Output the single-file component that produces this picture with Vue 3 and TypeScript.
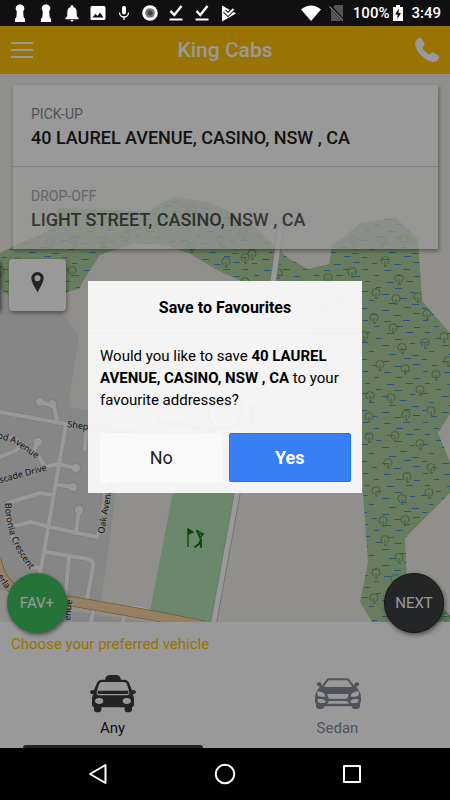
<script setup lang="ts">
import { ref } from 'vue'

type Point = [number, number]

const pickup = '40 LAUREL AVENUE, CASINO, NSW , CA'
const dropoff = 'LIGHT STREET, CASINO, NSW , CA'
const vehicle = ref('Any')
const dialogOpen = ref(true)

const forest =
  'M0 253L12 247L52 229L58 208L110 210L148 212L160 204L175 197L208 202L226 210L255 227L288 258L308 269L329 264L332 246L361 223L395 217L418 239L422 301L450 333V414L438 433L450 462V493L405 538L407 580L440 603L450 616V622H372L360 602L368 562L363 493L361 440L355 375L322 397L313 370L310 335L293 313L247 284L217 270L190 254L165 245L135 243L100 255L85 278L79 289L67 292L9 296L0 289Z'

const trees: Point[] = [
  [385, 261], [352, 272], [399, 279], [376, 293], [396, 299], [418, 297], [374, 318], [427, 314],
  [393, 328], [425, 343], [444, 337], [402, 348], [380, 365], [405, 369], [436, 375], [420, 390],
  [370, 396], [391, 398], [431, 411], [406, 415], [369, 417], [369, 437], [395, 436], [420, 444],
  [388, 463], [431, 468], [407, 477], [376, 491], [429, 493], [402, 499], [383, 521], [405, 520],
  [385, 540], [399, 558], [376, 573], [395, 579], [374, 598], [445, 617], [243, 233], [354, 241],
  [382, 241], [404, 240], [252, 254], [245, 258], [278, 273], [226, 262], [245, 282], [328, 278],
  [313, 292], [50, 243], [74, 241], [103, 241], [125, 236], [192, 210], [220, 240], [192, 247],
  [72, 271], [18, 262], [0, 271], [340, 300], [325, 312], [352, 346], [364, 336], [448, 361],
]

const dashes: Point[] = [
  [2, 2], [22, 4], [44, 1], [12, 8], [34, 9], [53, 7], [3, 14], [24, 15], [43, 14], [14, 20],
  [36, 20], [54, 21], [5, 26], [27, 27], [46, 26], [16, 32], [35, 33], [1, 36], [50, 37],
  [22, 39], [40, 43], [9, 45], [29, 48], [52, 49],
]

const roads = [
  'M66 424L40 575L37 604',
  'M0 412L66 424L120 435',
  'M57 420L54 406L40 402',
  'M0 436L15 438L38 455L45 467L58 464L76 468',
  'M38 442L33 452',
  'M0 457L15 451L20 446',
  'M58 485L73 487',
  'M8 503L40 493L53 495',
  'M8 503L11 532L21 558L30 567L40 568',
  'M15 526L30 522L50 527L97 537L101 528L108 470L112 435',
  'M79 510L76 533',
  'M46 552L88 559Q94 561 93 566L87 600',
  'M69 556L65 602',
  'M86 430L85 449',
  'M93 611L91 624',
  'M124 616L123 624',
  'M130 609L136 607L146 609L148 613',
  'M112 435L125 380L150 358',
  'M112 380L160 418L230 436',
]

const deadEnds: Point[] = [[40, 402], [52, 404], [38, 442], [76, 468], [73, 487], [79, 510]]
</script>

<template>
  <div class="phone">
    <div class="status">
      <div class="notices">
        <svg v-for="n in 2" :key="n" viewBox="0 0 20 20"><path d="M10 1.200a4.400 4.400 0 0 0-3.200 7.400L6.400 14l-1.400 2v3h10v-3l-1.400-2-.4-5.400A4.400 4.400 0 0 0 10 1.200Z" /></svg>
        <svg viewBox="0 0 20 20"><path d="M10 2.200c-.8 0-1.300.5-1.300 1.200v.6C6.300 4.600 5.300 6.600 5.300 9v4.300l-1.900 2v.9h13.200v-.9l-1.900-2V9c0-2.400-1-4.400-3.400-5v-.6c0-.7-.5-1.200-1.300-1.200ZM8.500 17a1.500 1.500 0 0 0 3 0Z" /></svg>
        <svg viewBox="0 0 20 20"><path fill-rule="evenodd" d="M4 3h12q1.500 0 1.500 1.500v11Q17.500 17 16 17H4q-1.500 0-1.500-1.500v-11Q2.500 3 4 3Zm.5 11.500h11L12 9.500 9.500 13l-2-2.300Z" /></svg>
        <svg viewBox="0 0 20 20"><rect x="8" y="3" width="4" height="8.500" rx="2" /><path class="line" d="M5.500 9.500a4.500 4.500 0 0 0 9 0M10 14v3" stroke-width="1.300" /></svg>
        <svg viewBox="0 0 20 20"><circle cx="10" cy="10" r="7.800" /><circle cx="10" cy="10" r="4.800" fill="#777" /><circle cx="10" cy="10" r="2.500" fill="#444" /></svg>
        <svg v-for="n in 2" :key="'c' + n" viewBox="0 0 20 20"><path class="line" d="M4.500 8l3.800 4L15.500 3" stroke-width="2.400" /><path d="M3.500 15.500h13v2h-13Z" /></svg>
        <svg viewBox="0 0 20 20"><path d="M4 2.500L18 10.500 4 18.500Z" /><path d="M6.500 8l3.500 3.500L16.500 5" fill="none" stroke="#101010" stroke-width="4" /><path class="line" d="M6.500 8l3.500 3.500L15.500 6" stroke-width="2" /></svg>
      </div>
      <div class="state">
        <svg class="wifi" viewBox="0 0 20 16"><path d="M0 4.500Q10-3.500 20 4.500L10 16Z" /></svg>
        <svg class="sim" viewBox="0 0 16 16"><path fill="#555" d="M6 0h8v16H2V4Z" /><path d="M1 1l13.500 14.500" stroke="#101010" stroke-width="3" /><path d="M.5 1.500L14 15.500" stroke="#777" stroke-width="1.200" /></svg>
        <span>100%</span>
        <svg class="battery" viewBox="0 0 10 16"><path d="M3 0h4v2h3v14H0V2h3Z" /><path fill="#101010" d="M6 3.500L2 9.500h2.500V14L8 8H5.600Z" /></svg>
        <span>3:49</span>
      </div>
    </div>

    <div class="app">
      <header class="bar">
        <button class="icon-button" type="button" aria-label="Menu">
          <svg width="24" height="16" viewBox="0 0 24 16"><path d="M1 1h22M1 8h22M1 15h22" stroke="#fff" stroke-width="2" /></svg>
        </button>
        <h1>King Cabs</h1>
        <button class="icon-button" type="button" aria-label="Call">
          <svg width="26" height="26" viewBox="0 0 26 26"><path fill="#fff" d="M4.500 1.200C6 .2 7.200.9 8 2.200l2.200 3.900c.7 1.300.3 2.300-.7 3.200-1 .9-1.200 1.400-.5 2.500 1.200 2 3 3.800 5 5 1.100.7 1.700.5 2.600-.4 1-1.100 2-1.400 3.300-.7l3.900 2.200c1.300.8 1.800 1.900 1 3.300-1.300 2.400-3.300 3.900-6 3.700-4.200-.4-8.900-3.500-12.400-7.100C3.400 14.800 1.500 11 1.200 7.300.9 4.700 2.200 2.600 4.500 1.200Z" /></svg>
        </button>
      </header>

      <main class="map">
        <svg class="tiles" viewBox="0 74 450 548" preserveAspectRatio="xMidYMin slice" aria-hidden="true">
          <defs>
            <pattern id="marsh" width="60" height="51" patternUnits="userSpaceOnUse">
              <rect v-for="(d, i) in dashes" :key="i" :x="d[0]" :y="d[1]" :width="i % 3 ? 7 : 5" height="1" fill="#4a90cc" />
            </pattern>
            <clipPath id="forest-clip"><path :d="forest" /></clipPath>
            <path id="wood-line" d="M-3 438L14 443L44 464" />
            <path id="boronia-line" d="M5 503Q6 548 40 580" />
            <path id="primary-line" d="M-3 576Q4 590 22 603" />
          </defs>
          <path d="M0 74H450V622H0Z" fill="#f2efe9" />
          <path d="M0 285L60 310L79 335L68 407L122 416L116 493L101 602L0 590Z" fill="#e0dfdf" />
          <path d="M70 611L150 622H60Z" fill="#e0dfdf" />
          <path :d="forest" fill="#add19e" />
          <path :d="forest" fill="url(#marsh)" />
          <g clip-path="url(#forest-clip)" fill="none" stroke="#7ca872" stroke-width="1.300">
            <path v-for="(t, i) in trees" :key="i" :d="`M${t[0] - 2} ${t[1] + 3}A4 4 0 1 1 ${t[0] + 2} ${t[1] + 3}M${t[0]} ${t[1]}V${t[1] + 6}M${t[0] - 1} ${t[1] + 5}H${t[0] + 2}`" />
          </g>
          <path d="M227 376H244V389H227ZM180 455L150 611L214 623L245 445Z" fill="#b5e3b5" />
          <g fill="none" stroke="#cfcfcf" stroke-width="5" stroke-linejoin="round" stroke-linecap="round">
            <path v-for="(r, i) in roads" :key="i" :d="r" />
            <path d="M281 226L274 275L236 500L213 626" stroke="#c0c0c0" stroke-width="7" />
          </g>
          <circle v-for="(c, i) in deadEnds" :key="'o' + i" :cx="c[0]" :cy="c[1]" r="5" fill="#cfcfcf" />
          <g fill="none" stroke="#fff" stroke-width="4" stroke-linejoin="round" stroke-linecap="round">
            <path v-for="(r, i) in roads" :key="i" :d="r" />
            <path d="M281 226L274 275L236 500L213 626" stroke-width="5" />
          </g>
          <circle v-for="(c, i) in deadEnds" :key="'i' + i" :cx="c[0]" :cy="c[1]" r="4" fill="#fff" />
          <path d="M-4 558Q2 590 30 598L70 601L150 615L205 626" fill="none" stroke="#b07a28" stroke-width="10" />
          <path d="M-4 558Q2 590 30 598L70 601L150 615L205 626" fill="none" stroke="#fcd6a4" stroke-width="9" />
          <g class="street-names">
            <text><textPath href="#wood-line">od Avenue</textPath></text>
            <text transform="translate(0 483) rotate(-15)">scade Drive</text>
            <text transform="translate(67 427) rotate(8)">Sheppard Street</text>
            <text><textPath href="#boronia-line">Boronia Crescent</textPath></text>
            <text transform="translate(104 534) rotate(-80)">Oak Avenue</text>
            <text><textPath href="#primary-line">erla</textPath></text>
            <text transform="translate(70 621) rotate(-84)">enue</text>
            <text transform="translate(133 370) rotate(5)">Fairway Drive</text>
            <text transform="translate(156 423) rotate(10)">Laurel Avenue</text>
            <text transform="translate(250 458) rotate(-84)">Young Street</text>
          </g>
          <path d="M188 547V529L193 532L188 534" fill="#107810" stroke="#107810" stroke-width="1.400" />
          <g fill="none" stroke="#107810" stroke-linecap="round" stroke-linejoin="round">
            <path d="M204 534L196 530L198 533" stroke-width="1" />
            <path d="M198 534L203 534L200 538" stroke-width="1.500" />
            <path d="M199 535L201 540L199 544L195 547M201 540L201 547" stroke-width="2" />
          </g>
          <circle cx="198" cy="532" r="1.500" fill="#107810" />
          <g fill="none" stroke="#777"><circle cx="225" cy="412" r="17" stroke-width="2" /><path d="M225 378V412" /></g>
        </svg>

        <section class="trip">
          <div class="leg">
            <span class="leg-label">PICK-UP</span>
            <strong>{{ pickup }}</strong>
          </div>
          <div class="leg faded">
            <span class="leg-label">DROP-OFF</span>
            <strong>{{ dropoff }}</strong>
          </div>
        </section>
        <div class="side-tab"></div>
        <button class="locate" type="button" aria-label="Use my location">
          <svg width="13" height="20" viewBox="0 0 13 20"><path fill="#3c3e42" fill-rule="evenodd" d="M6.500 0A6.200 6.200 0 0 0 .3 6.200C.3 10.500 6.500 20 6.500 20s6.200-9.500 6.200-13.800A6.200 6.200 0 0 0 6.500 0Zm0 3.200a3 3 0 1 1 0 6 3 3 0 0 1 0-6Z" /></svg>
        </button>
        <button class="round fav" type="button">FAV+</button>
        <button class="round next" type="button">NEXT</button>
      </main>

      <section class="vehicles">
        <h2>Choose your preferred vehicle</h2>
        <div class="options">
          <button type="button" class="option" :class="{ active: vehicle === 'Any' }" @click="vehicle = 'Any'">
            <svg width="46" height="38" viewBox="0 0 138 114">
              <path fill="currentColor" fill-rule="evenodd" d="M46 14V9Q50 0 60 0H78Q88 0 92 9V14H104Q114 15 117 23L126 46H134Q138 47 138 52Q137 58 128 58L132 68V90Q131 96 126 97V105Q125 112 115 112Q104 112 104 105V97H34V105Q33 112 23 112Q12 112 12 105V97Q7 96 6 90V68L10 58Q1 58 0 52Q0 47 4 46H12L21 23Q24 15 34 14ZM36 21Q29 22 27 28L20 52Q19 61 27 61H111Q119 61 118 52L111 28Q109 22 102 21ZM28 69C20 69 15 73 15 78S20 87 28 87S40 83 40 78S36 69 28 69ZM110 69C102 69 98 73 98 78S102 87 110 87S123 83 123 78S118 69 110 69Z" />
              <path fill="currentColor" d="M24 47H114L116 54Q114 57 110 57H28Q24 57 22 54Z" />
            </svg>
            <span>Any</span>
          </button>
          <button type="button" class="option" :class="{ active: vehicle === 'Sedan' }" @click="vehicle = 'Sedan'">
            <svg width="46" height="38" viewBox="0 -10 138 114">
              <path fill="currentColor" fill-rule="evenodd" d="M42 0H96Q101 0 104 4L117 22Q118 14 123 12Q131 10 133 17Q132 24 123 24L132 37Q138 46 138 58V68Q138 73 135 76V84Q134 92 125 92H117Q110 91 109 84H29Q28 91 21 92H13Q4 92 3 84V76Q0 73 0 68V58Q0 46 6 37L15 24Q6 24 5 17Q7 10 15 12Q20 14 21 22L34 4Q37 0 42 0ZM43 6Q40 6 38 9L26 26H112L100 9Q98 6 95 6ZM8 38Q5 45 7 51Q10 55 18 55H31Q31 46 21 42ZM130 38Q133 45 131 51Q128 55 120 55H107Q107 46 117 42ZM37 47Q38 58 43 61H95Q100 58 101 47ZM8 62V69Q9 74 16 74H28L33 70Q28 63 19 62ZM130 62V69Q129 74 122 74H110L105 70Q110 63 119 62ZM42 68L36 76H102L96 68Z" />
            </svg>
            <span>Sedan</span>
          </button>
        </div>
      </section>

      <div v-if="dialogOpen" class="backdrop">
        <div class="dialog" role="dialog" aria-modal="true" aria-labelledby="dialog-title">
          <h2 id="dialog-title">Save to Favourites</h2>
          <p>Would you like to save <b>{{ pickup }}</b> to your favourite addresses?</p>
          <div class="actions">
            <button type="button" class="no" @click="dialogOpen = false">No</button>
            <button type="button" class="yes" @click="dialogOpen = false">Yes</button>
          </div>
        </div>
      </div>
    </div>

    <nav class="system">
      <button type="button" aria-label="Back"><svg width="22" height="22" viewBox="0 0 22 22"><path d="M18.500 2V20L3 11Z" /></svg></button>
      <button type="button" aria-label="Home"><svg width="22" height="22" viewBox="0 0 22 22"><circle cx="11" cy="11" r="9.300" /></svg></button>
      <button type="button" aria-label="Recent apps"><svg width="22" height="22" viewBox="0 0 22 22"><rect x="3" y="3" width="16" height="16" /></svg></button>
    </nav>
  </div>
</template>

<style>
body {
  margin: 0;
}
</style>

<style scoped>
.phone {
  display: flex;
  flex-direction: column;
  height: 100vh;
  overflow: hidden;
  font-family: Roboto, "Liberation Sans", sans-serif;
  font-size: 15px;
}
button {
  margin: 0;
  padding: 0;
  border: 0;
  background: none;
  font: inherit;
  cursor: pointer;
}
h1,
h2,
p {
  margin: 0;
}
.status {
  display: flex;
  justify-content: space-between;
  align-items: center;
  height: 26px;
  padding: 0 9px 0 10px;
  background: #101010;
  color: #fff;
  font-weight: 500;
}
.status svg {
  fill: #fff;
}
.status .line {
  fill: none;
  stroke: #fff;
}
.notices {
  display: flex;
  gap: 6px;
}
.notices svg {
  width: 20px;
  height: 20px;
}
.state {
  display: flex;
  align-items: center;
  gap: 8px;
}
.state .wifi {
  width: 20px;
  height: 16px;
}
.state .sim {
  width: 16px;
  height: 16px;
}
.state .battery {
  width: 10px;
  height: 16px;
  margin-left: -4px;
}
.app {
  position: relative;
  display: flex;
  flex: 1;
  flex-direction: column;
  min-height: 0;
  overflow: hidden;
}
.bar {
  display: flex;
  align-items: center;
  justify-content: space-between;
  height: 48px;
  padding: 0 10px;
  background: #ffc107;
  color: #fff;
}
.bar h1 {
  font-size: 21px;
  font-weight: 500;
}
.icon-button {
  display: flex;
  width: 26px;
}
.map {
  position: relative;
  z-index: 1;
  flex: 1;
  padding: 11px 12px 0 13px;
}
.tiles {
  position: absolute;
  inset: 0;
  width: 100%;
  height: 100%;
}
.street-names {
  fill: #222;
  stroke: #e8e8e8;
  stroke-width: 2px;
  paint-order: stroke;
  font-family: "Noto Sans", sans-serif;
  font-size: 9px;
}
.trip {
  position: relative;
  box-shadow: 1px 2px 4px rgba(0, 0, 0, 0.4);
}
.leg {
  display: flex;
  flex-direction: column;
  gap: 2px;
  height: 82px;
  box-sizing: border-box;
  padding: 19px 18px 0;
  border-bottom: 1px solid #dad8d6;
  background: #fff;
  color: #222;
}
.leg.faded {
  border-bottom: 0;
  opacity: 0.7;
}
.leg-label {
  color: #868b98;
  font-size: 14px;
  line-height: 20px;
}
.leg strong {
  font-size: 18px;
  font-weight: 500;
  line-height: 24px;
}
.side-tab {
  position: absolute;
  top: 186px;
  left: -10px;
  width: 10px;
  height: 50px;
  box-shadow: 1px 2px 4px rgba(0, 0, 0, 0.6);
}
.locate {
  position: absolute;
  top: 185px;
  left: 9px;
  display: flex;
  align-items: center;
  justify-content: center;
  width: 57px;
  height: 52px;
  padding-bottom: 6px;
  border-radius: 4px;
  background: #fff;
  box-shadow: 1px 2px 4px rgba(0, 0, 0, 0.4);
}
.round {
  position: absolute;
  bottom: -11px;
  width: 60px;
  height: 60px;
  border-radius: 50%;
  color: #fff;
  box-shadow: 1px 2px 4px rgba(0, 0, 0, 0.5);
}
.fav {
  left: 7px;
  background: #3ec060;
}
.next {
  right: 6px;
  border: 1px solid #222;
  background: #3c3e42;
}
.vehicles {
  height: 126px;
  background: #fff;
}
.vehicles h2 {
  padding: 12px 11px 0;
  color: #ffc107;
  font-size: 15px;
  font-weight: 400;
  line-height: 20px;
}
.options {
  display: grid;
  grid-template-columns: 1fr 1fr;
  padding-top: 21px;
}
.option {
  display: flex;
  flex-direction: column;
  align-items: center;
  gap: 5px;
  color: #868b98;
  line-height: 20px;
}
.option.active {
  color: #3a3b3e;
}
.option.active span {
  color: #222;
}
.option.active::after {
  width: 80%;
  height: 8px;
  margin-top: 2px;
  border-radius: 3px;
  background: #3a3b3e;
  content: "";
}
.backdrop {
  position: absolute;
  inset: 0;
  z-index: 2;
  display: flex;
  align-items: center;
  justify-content: center;
  background: rgba(0, 0, 0, 0.4);
}
.dialog {
  width: 274px;
  background: rgba(248, 248, 248, 0.96);
  color: #000;
}
.dialog h2 {
  height: 52px;
  border-bottom: 1px solid #eeeeec;
  font-size: 16px;
  font-weight: 700;
  line-height: 54px;
  text-align: center;
}
.dialog p {
  padding: 11px 12px 0;
  line-height: 22px;
}
.dialog b {
  font-weight: 700;
}
.actions {
  display: grid;
  grid-template-columns: 1fr 1fr;
  gap: 6px;
  padding: 22px 11px 11px 12px;
}
.actions button {
  height: 49px;
  border-radius: 2px;
  font-size: 18px;
}
.no {
  background: #f9f9f9;
  color: #222;
}
.actions .yes {
  border: 1px solid #1f74f5;
  background: #387ef5;
  color: #fff;
  font-weight: 700;
}
.system {
  display: flex;
  justify-content: space-around;
  align-items: center;
  height: 52px;
  padding: 0 35px;
  background: #000;
}
.system button {
  display: flex;
}
.system svg {
  fill: none;
  stroke: #fff;
  stroke-width: 2px;
  stroke-linejoin: round;
}
</style>
